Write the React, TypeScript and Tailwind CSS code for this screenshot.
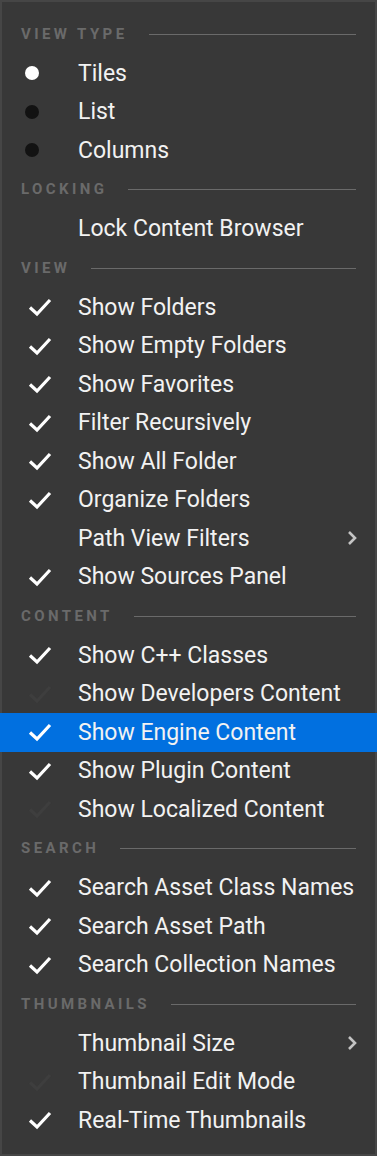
import React from "react";

type Item =
  | { kind: "header"; label: string }
  | { kind: "item"; label: string; icon: "check" | "faint" | "none" | "dotOn" | "dotOff"; sub?: boolean; active?: boolean };

const items: Item[] = [
  { kind: "header", label: "VIEW TYPE" },
  { kind: "item", label: "Tiles", icon: "dotOn" },
  { kind: "item", label: "List", icon: "dotOff" },
  { kind: "item", label: "Columns", icon: "dotOff" },
  { kind: "header", label: "LOCKING" },
  { kind: "item", label: "Lock Content Browser", icon: "none" },
  { kind: "header", label: "VIEW" },
  { kind: "item", label: "Show Folders", icon: "check" },
  { kind: "item", label: "Show Empty Folders", icon: "check" },
  { kind: "item", label: "Show Favorites", icon: "check" },
  { kind: "item", label: "Filter Recursively", icon: "check" },
  { kind: "item", label: "Show All Folder", icon: "check" },
  { kind: "item", label: "Organize Folders", icon: "check" },
  { kind: "item", label: "Path View Filters", icon: "none", sub: true },
  { kind: "item", label: "Show Sources Panel", icon: "check" },
  { kind: "header", label: "CONTENT" },
  { kind: "item", label: "Show C++ Classes", icon: "check" },
  { kind: "item", label: "Show Developers Content", icon: "faint" },
  { kind: "item", label: "Show Engine Content", icon: "check", active: true },
  { kind: "item", label: "Show Plugin Content", icon: "check" },
  { kind: "item", label: "Show Localized Content", icon: "faint" },
  { kind: "header", label: "SEARCH" },
  { kind: "item", label: "Search Asset Class Names", icon: "check" },
  { kind: "item", label: "Search Asset Path", icon: "check" },
  { kind: "item", label: "Search Collection Names", icon: "check" },
  { kind: "header", label: "THUMBNAILS" },
  { kind: "item", label: "Thumbnail Size", icon: "none", sub: true },
  { kind: "item", label: "Thumbnail Edit Mode", icon: "faint" },
  { kind: "item", label: "Real-Time Thumbnails", icon: "check" },
];

function Check({ color }: { color: string }) {
  return (
    <svg width="24" height="20" viewBox="0 0 24 20" className="block">
      <path d="M2 10.5 L9 17 L22 3" fill="none" stroke={color} strokeWidth="3.2" strokeLinecap="butt" strokeLinejoin="miter" />
    </svg>
  );
}

function Icon({ icon }: { icon: string }) {
  if (icon === "check") return <div className="pl-[26px]"><Check color="#ffffff" /></div>;
  if (icon === "faint") return <div className="pl-[26px]"><Check color="#3e3e3e" /></div>;
  if (icon === "dotOn") return <div className="pl-[23px]"><div className="w-[14px] h-[14px] rounded-full bg-white" /></div>;
  if (icon === "dotOff") return <div className="pl-[23px]"><div className="w-[14px] h-[14px] rounded-full bg-[#121212]" /></div>;
  return null;
}

export default function App() {
  return (
    <div className="w-[377px] h-[1156px] bg-[#383838] border-2 border-[#464646] pt-[12px] flex flex-col" style={{ fontFamily: "Roboto, 'Noto Sans', sans-serif" }}>
      {items.map((it, i) =>
        it.kind === "header" ? (
          <div key={i} className="h-[40px] flex items-center pl-[19px] pr-[19px] shrink-0">
            <span className="text-[15px] font-bold tracking-[3.4px] text-[#6a6a6a] leading-none">{it.label}</span>
            <div className="flex-1 h-px bg-[#6a6a6a] ml-[21px]" />
          </div>
        ) : (
          <div key={i} className={`h-[38.5px] shrink-0 flex items-center ${it.active ? "bg-[#0170e0] -mx-[2px] px-[2px]" : ""}`}>
            <div className="w-[76px] shrink-0 flex items-center"><Icon icon={it.icon} /></div>
            <span className="flex-1 text-[23px] text-[#f2f2f2] leading-none whitespace-nowrap">{it.label}</span>
            {it.sub && (
              <svg width="12" height="16" viewBox="0 0 12 16" className="mr-[17px]">
                <path d="M3 2 L9 8 L3 14" fill="none" stroke="#c4c4c4" strokeWidth="2.6" />
              </svg>
            )}
          </div>
        )
      )}
    </div>
  );
}
